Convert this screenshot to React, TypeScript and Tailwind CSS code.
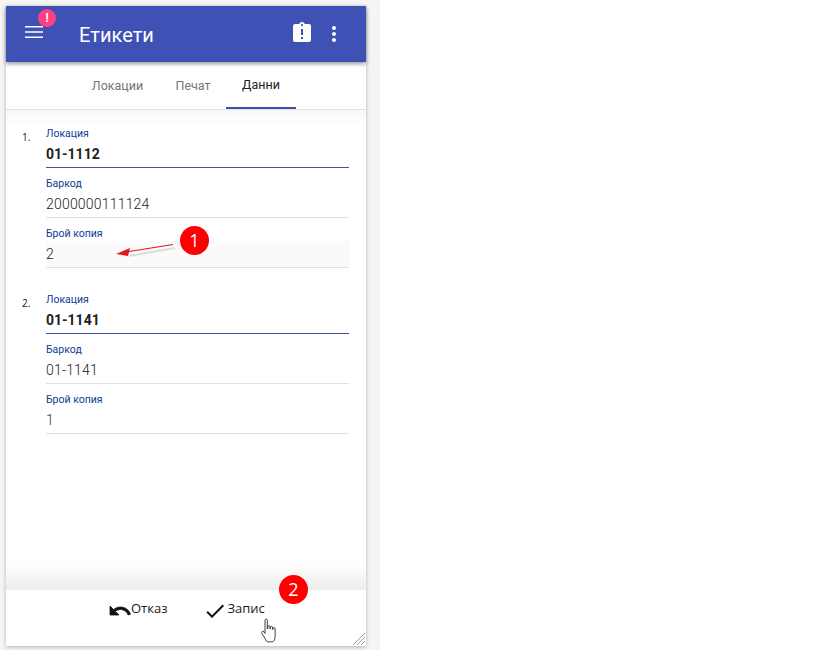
import React from 'react';

const Field = ({ label, value, focus, bold, shaded, valueColor }: { label: string; value: string; focus?: boolean; bold?: boolean; shaded?: boolean; valueColor?: string }) => (
  <div className="h-[50px] flex flex-col">
    <div className="h-[23px] flex items-end">
      <span className="text-[10.5px] leading-[14px] text-[#0d3a94]">{label}</span>
    </div>
    <div className={`h-[27px] flex items-center text-[14px] border-b ${focus ? 'border-[#3f51b5]' : 'border-[#e0e0e0]'} ${shaded ? 'bg-[#fafafa]' : ''} ${bold ? 'font-bold text-[#212121]' : 'font-[350] tracking-[0.2px]'} ${valueColor || ''}`}>
      {value}
    </div>
  </div>
);

const Item = ({ n, loc, barcode, copies, shaded, copiesColor }: { n: string; loc: string; barcode: string; copies: string; shaded?: boolean; copiesColor: string }) => (
  <div className="flex">
    <div className="w-[40px] pl-[16px] pt-[12px] text-[10px] leading-[14px] text-[#111111] font-['Open_Sans',sans-serif]">{n}</div>
    <div className="w-[303px]">
      <Field label="Локация" value={loc} focus bold />
      <Field label="Баркод" value={barcode} valueColor="text-[#22222a]" />
      <Field label="Брой копия" value={copies} shaded={shaded} valueColor={copiesColor} />
    </div>
  </div>
);

const Tab = ({ label, active, w }: { label: string; active?: boolean; w: string }) => (
  <div className={`${w} h-full flex items-center justify-center text-[12.5px] ${active ? 'text-[#212121] border-b-2 border-[#3f51b5]' : 'text-[#757575]'}`}>
    {label}
  </div>
);

export default function App() {
  return (
    <div className="w-[819px] h-[650px] bg-white font-['Roboto',sans-serif]">
      <div className="w-[380px] h-full bg-[#f5f5f5] p-[6px] pr-[14px] relative">
        <div className="w-[360px] h-[640px] bg-white flex flex-col shadow-[0_1px_4px_rgba(0,0,0,0.28)] relative">
          {/* header */}
          <div className="h-[56px] shrink-0 bg-[#3f51b5] flex items-center text-white shadow-[0_2px_4px_rgba(0,0,0,0.4)] relative z-10">
            <div className="w-[72px] pl-[16px] flex items-center relative">
              <svg width="24" height="24" viewBox="0 0 24 24" fill="#fff" className="-translate-y-[2px]">
                <path d="M3 18h18v-1.6H3V18zm0-5.2h18v-1.6H3v1.6zM3 6v1.6h18V6H3z" />
              </svg>
              <div className="absolute left-[32px] -top-[13px] w-[18px] h-[18px] rounded-full bg-[#ff4081] flex items-center justify-center text-[12px] font-bold leading-none">!</div>
            </div>
            <div className="text-[20px] ml-[1px] mt-[1px] flex-1 font-normal">Етикети</div>
            <svg width="24" height="24" viewBox="0 0 24 24" fill="#fff" className="mr-[8px] -translate-y-[1px]">
              <path d="M19 3h-4.18C14.4 1.84 13.3 1 12 1c-1.3 0-2.4.84-2.82 2H5c-1.1 0-2 .9-2 2v14c0 1.1.9 2 2 2h14c1.1 0 2-.9 2-2V5c0-1.1-.9-2-2-2zm-6 15h-2v-2h2v2zm0-4h-2V8h2v6zm-1-9c-.55 0-1-.45-1-1s.45-1 1-1 1 .45 1 1-.45 1-1 1z" />
            </svg>
            <svg width="24" height="24" viewBox="0 0 24 24" fill="#fff" className="mr-[20px]">
              <path d="M12 8c1.1 0 2-.9 2-2s-.9-2-2-2-2 .9-2 2 .9 2 2 2zm0 2c-1.1 0-2 .9-2 2s.9 2 2 2 2-.9 2-2-.9-2-2-2zm0 6c-1.1 0-2 .9-2 2s.9 2 2 2 2-.9 2-2-.9-2-2-2z" />
            </svg>
          </div>
          {/* tabs */}
          <div className="h-[48px] shrink-0 flex justify-center border-b border-[#e0e0e0] pt-[1px] pr-[1px]">
            <div className="flex h-full">
              <Tab label="Локации" w="w-[85px]" />
              <Tab label="Печат" w="w-[66px]" />
              <Tab label="Данни" w="w-[70px]" active />
            </div>
          </div>
          {/* list */}
          <div className="flex-1 pt-[8px] flex flex-col gap-[16px] bg-[linear-gradient(to_bottom,#f7f7f7_0px,#ffffff_16px)]">
            <Item n="1." loc="01-1112" barcode="2000000111124" copies="2" shaded copiesColor="text-[#222222]" />
            <Item n="2." loc="01-1141" barcode="01-1141" copies="1" copiesColor="text-[#5c1a6b]" />
          </div>
          <div className="h-[26px] shrink-0 bg-[linear-gradient(to_bottom,#ffffff,#ececec)]" />
          {/* footer */}
          <div className="h-[56px] shrink-0 flex items-start pt-[8px] pl-[102px] text-[13px] text-[#1a1a1a] font-['Open_Sans',sans-serif]">
            <div className="flex items-center h-[22px]">
              <svg width="24" height="24" viewBox="0 0 24 24" fill="#111" stroke="#111" strokeWidth="0.8" className="mt-[4px] -mr-[1px]">
                <path d="M12.500 8c-2.650 0-5.050.99-6.900 2.600L2 7v9h9l-3.620-3.620c1.390-1.160 3.160-1.880 5.120-1.880 3.540 0 6.550 2.310 7.600 5.500l2.370-.78C21.080 11.030 17.150 8 12.500 8z" />
              </svg>
              <span>Отказ</span>
            </div>
            <div className="flex items-center h-[22px] ml-[36px]">
              <svg width="24" height="24" viewBox="0 0 24 24" fill="#111" className="mt-[4px]">
                <path d="M9 16.170L4.830 12l-1.420 1.410L9 19 21 7l-1.410-1.410z" />
              </svg>
              <span>Запис</span>
            </div>
          </div>
          {/* resize grip */}
          <svg width="14" height="14" viewBox="0 0 14 14" className="absolute right-0 bottom-0" stroke="#9e9e9e" strokeWidth="1">
            <path d="M1 13L13 1M5 13l8-8M9 13l4-4" />
          </svg>
        </div>

        {/* annotation 1 */}
        <svg width="70" height="24" viewBox="0 0 70 24" className="absolute left-[112px] top-[243px]">
          <path d="M62 3 L16 11" stroke="#dcdcdc" strokeWidth="2" fill="none" transform="translate(1 2)" />
          <path d="M61 1.500 L14 9" stroke="#e8141c" strokeWidth="1.200" fill="none" />
          <path d="M4 11 L18 5 L16 13 Z" fill="#e8141c" />
        </svg>
        <div className="absolute left-[180px] top-[226px] w-[29px] h-[29px] rounded-full bg-[#ff0000] text-white flex items-center justify-center text-[18px] font-['Open_Sans',sans-serif]">1</div>

        {/* annotation 2 */}
        <div className="absolute left-[279px] top-[575px] w-[29px] h-[29px] rounded-full bg-[#ff0000] text-white flex items-center justify-center text-[18px] font-['Open_Sans',sans-serif]">2</div>

        {/* hand cursor */}
        <svg width="18" height="25" viewBox="0 0 15 22" className="absolute left-[260px] top-[618px]" fill="#fff" stroke="#2a2a3a" strokeWidth="0.8">
          <path d="M4 2c0-1.300 2-1.300 2 0v7.500l.5-.2V7.500c0-1.100 1.800-1.100 1.800 0v2l.5.100V8.200c0-1.100 1.800-1.100 1.800 0v1.800l.5.100V9.200c0-1.100 1.800-1.100 1.800 0V16c0 3-1.300 5-2.500 5H6.500c-1 0-1.500-1-2.500-3L1.200 13.500c-.7-1.400.8-2.400 1.800-1.400L4 13.500z" />
        </svg>
      </div>
    </div>
  );
}
